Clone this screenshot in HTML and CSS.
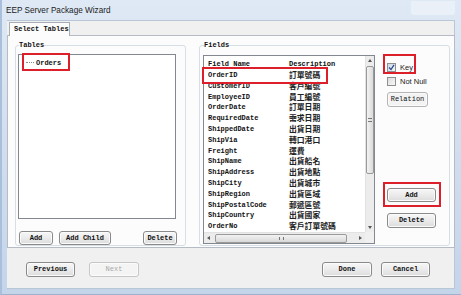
FILE: index.html
```html
<!DOCTYPE html>
<html lang="en">

<head>
  <meta charset="UTF-8">
  <meta name="viewport" content="width=device-width, initial-scale=1.0">
  <title>EEP Server Package Wizard</title>
  <link rel="stylesheet" href="styles.css">
</head>

<body>
  <div class="window">
    <div class="titlebar">
      <span class="caption">EEP Server Package Wizard</span>
      <span class="caps"></span>
    </div>
    <div class="client">
      <div class="tabs">
        <div class="tab">Select Tables</div>
      </div>
      <div class="page">
        <div class="group tables">
          <div class="legend">Tables</div>
          <div class="listbox">
            <div class="node"><span class="dots"></span>Orders</div>
          </div>
          <div class="btnrow">
            <div class="btn w34">Add</div>
            <div class="btn w52">Add Child</div>
            <div class="btn w34 right">Delete</div>
          </div>
        </div>
        <div class="group fields">
          <div class="legend">Fields</div>
          <div class="fieldbody">
            <div class="grid">
              <div class="rows">
                <div class="row head"><span class="name">Field Name</span><span>Description</span></div>
                <div class="row"><span class="name">OrderID</span><span class="cjk">訂單號碼</span></div>
                <div class="row"><span class="name">CustomerID</span><span class="cjk">客戶編號</span></div>
                <div class="row"><span class="name">EmployeeID</span><span class="cjk">員工編號</span></div>
                <div class="row"><span class="name">OrderDate</span><span class="cjk">訂單日期</span></div>
                <div class="row"><span class="name">RequiredDate</span><span class="cjk">需求日期</span></div>
                <div class="row"><span class="name">ShippedDate</span><span class="cjk">出貨日期</span></div>
                <div class="row"><span class="name">ShipVia</span><span class="cjk">轉口港口</span></div>
                <div class="row"><span class="name">Freight</span><span class="cjk">運費</span></div>
                <div class="row"><span class="name">ShipName</span><span class="cjk">出貨船名</span></div>
                <div class="row"><span class="name">ShipAddress</span><span class="cjk">出貨地點</span></div>
                <div class="row"><span class="name">ShipCity</span><span class="cjk">出貨城市</span></div>
                <div class="row"><span class="name">ShipRegion</span><span class="cjk">出貨區域</span></div>
                <div class="row"><span class="name">ShipPostalCode</span><span class="cjk">郵遞區號</span></div>
                <div class="row"><span class="name">ShipCountry</span><span class="cjk">出貨國家</span></div>
                <div class="row"><span class="name">OrderNo</span><span class="cjk">客戶訂單號碼</span></div>
              </div>
              <div class="vscroll">
                <div class="arrow up"></div>
                <div class="vthumb"><span class="grip"></span></div>
                <div class="arrow down"></div>
              </div>
              <div class="hscroll">
                <div class="arrow left"></div>
                <div class="hthumb"><span class="hgrip"></span></div>
                <div class="arrow rightarr"></div>
              </div>
              <div class="corner"></div>
            </div>
            <div class="side">
              <div class="check">
                <span class="box on">
                  <svg width="7" height="7" viewBox="0 0 7 7"><path d="M1 3.5 L3 5.5 L6 0.8" fill="none" stroke="#2c4a8a" stroke-width="1.3"/></svg>
                </span>Key
              </div>
              <div class="check"><span class="box"></span>Not Null</div>
              <div class="btn w41 rel">Relation</div>
              <div class="btn w49 add">Add</div>
              <div class="btn w49 del">Delete</div>
            </div>
          </div>
        </div>
      </div>
      <div class="footer">
        <div class="btn w49">Previous</div>
        <div class="btn w50 off next">Next</div>
        <div class="btn w50 done">Done</div>
        <div class="btn w49 cancel">Cancel</div>
      </div>
    </div>

    <div class="mark m1"></div>
    <div class="mark m2"></div>
    <div class="mark m3"></div>
    <div class="mark m4"></div>
  </div>
</body>

</html>
```

FILE: styles.css
```css
* {
  box-sizing: border-box;
}

body {
  margin: 0;
  background-color: #fff;
}

.window {
  position: relative;
  width: 461px;
  height: 295px;
  padding: 0 6px 5px 5px;
  display: flex;
  flex-direction: column;
  background: linear-gradient(#dfe9f5, #cfdced 60%, #c4d5ea);
  border-left: 2px solid #a9c0dc;
  border-bottom: 1px solid #9db2cc;
  font-family: "Liberation Mono", monospace;
  font-size: 7px;
  color: #111;
}

.titlebar {
  height: 20px;
  display: flex;
  align-items: center;
  justify-content: space-between;
  margin-left: -1px;
}

.caption {
  font-family: "Liberation Sans", Arial, sans-serif;
  font-size: 8.2px;
  color: #1c1c1c;
}

.caps {
  width: 44px;
  height: 14px;
  margin-top: -5px;
  border-radius: 0 0 3px 3px;
  background: rgba(255, 255, 255, 0.35);
}

.client {
  flex: 1;
  display: flex;
  flex-direction: column;
  background-color: #f0f0f0;
  border: 1px solid #b8c6d8;
  border-width: 1px 1px 1px 0;
}

.tabs {
  height: 14px;
  padding-left: 2px;
  display: flex;
  align-items: flex-end;
}

.tab {
  width: 61px;
  height: 14px;
  margin-bottom: -1px;
  padding-left: 4px;
  line-height: 12px;
  font-weight: bold;
  background-color: #fcfcfc;
  border: 1px solid #a7adb5;
  border-bottom: none;
  position: relative;
  z-index: 1;
}

.page {
  width: 448px;
  height: 213px;
  padding: 9px 0 0 7px;
  display: flex;
  align-items: flex-start;
  background-color: #fcfcfc;
  border: 1px solid #b5bcc5;
}

.group {
  height: 201px;
  border: 1px solid #d5dfe5;
  border-radius: 3px;
}

.group.tables {
  width: 171px;
}

.group.fields {
  width: 251px;
  margin-left: 13px;
}

.legend {
  width: fit-content;
  height: 11px;
  margin: -6px 0 0 3px;
  line-height: 11px;
  font-weight: bold;
  background-color: #fcfcfc;
}

.fields .legend {
  margin-left: 4px;
}

.listbox {
  width: 158px;
  height: 165px;
  margin: 3px 0 0 2px;
  padding: 2px 0 0 7px;
  background-color: #fff;
  border: 1px solid #828790;
}

.node {
  display: flex;
  align-items: center;
  height: 11px;
  font-weight: bold;
}

.dots {
  width: 8px;
  margin-right: 2px;
  border-top: 1px dotted #8a8a8a;
}

.btnrow {
  display: flex;
  margin: 12px 0 0 3px;
}

.btn {
  height: 14px;
  line-height: 12px;
  text-align: center;
  font-weight: bold;
  border: 1px solid #8a8a8a;
  border-radius: 3px;
  background: linear-gradient(#f7f7f7, #ebebeb 50%, #dcdcdc);
  box-shadow: inset 0 0 0 1px #fbfbfb;
}

.btnrow .btn + .btn {
  margin-left: 6px;
}

.btnrow .btn.right {
  margin-left: auto;
  margin-right: 8px;
}

.w34 { width: 34px; }
.w41 { width: 41px; }
.w49 { width: 49px; }
.w50 { width: 50px; }
.w52 { width: 52px; }

.fieldbody {
  display: flex;
  margin: 4px 0 0 3px;
}

.grid {
  width: 172px;
  height: 189px;
  display: grid;
  grid-template-columns: 1fr 9px;
  grid-template-rows: 1fr 11px;
  background-color: #fff;
  border: 1px solid #828790;
}

.rows {
  padding: 2px 0 0 4px;
  overflow: hidden;
}

.row {
  display: flex;
  height: 10.8px;
  line-height: 10.8px;
  white-space: nowrap;
  font-weight: bold;
}

.row.head {
  height: 12px;
  line-height: 12px;
}

.row .name {
  width: 81px;
}

.cjk {
  font-family: "Noto Sans CJK TC", sans-serif;
  font-size: 7.8px;
  font-weight: bold;
  color: #222;
}

.vscroll {
  display: flex;
  flex-direction: column;
  align-items: center;
  background-color: #ececec;
  border-left: 1px solid #e2e2e2;
}

.vthumb {
  width: 8px;
  height: 108px;
  margin-top: 1px;
  display: flex;
  align-items: center;
  justify-content: center;
  border: 1px solid #9a9a9a;
  border-radius: 2px;
  background: linear-gradient(90deg, #f3f3f3, #dadada);
}

.grip {
  width: 4px;
  height: 4px;
  border-top: 1px solid #777;
  border-bottom: 1px solid #777;
}

.hscroll {
  display: flex;
  align-items: center;
  background-color: #ececec;
  border-top: 1px solid #e2e2e2;
}

.hthumb {
  width: 132px;
  height: 9px;
  margin-left: 2px;
  display: flex;
  align-items: center;
  justify-content: center;
  border: 1px solid #9a9a9a;
  border-radius: 2px;
  background: linear-gradient(#f3f3f3, #d8d8d8);
}

.hgrip {
  width: 5px;
  height: 3px;
  border-left: 1px solid #777;
  border-right: 1px solid #777;
}

.corner {
  background-color: #f0f0f0;
}

.arrow {
  width: 9px;
  height: 9px;
  display: flex;
  align-items: center;
  justify-content: center;
}

.arrow::before {
  content: "";
  border: 2px solid transparent;
}

.arrow.up::before {
  border-bottom: 3px solid #555;
  border-top-width: 0;
}

.arrow.down {
  margin-top: auto;
}

.arrow.down::before {
  border-top: 3px solid #555;
  border-bottom-width: 0;
}

.arrow.left::before {
  border-right: 3px solid #555;
  border-left-width: 0;
}

.arrow.rightarr {
  margin-left: auto;
}

.arrow.rightarr::before {
  border-left: 3px solid #555;
  border-right-width: 0;
}

.side {
  display: flex;
  flex-direction: column;
  margin-left: 12px;
  padding-top: 8px;
  font-family: "Liberation Sans", Arial, sans-serif;
  font-size: 7.5px;
}

.check {
  display: flex;
  height: 14px;
  align-items: flex-start;
  color: #222;
  line-height: 9px;
}

.box {
  width: 9px;
  height: 9px;
  margin-right: 4px;
  display: flex;
  align-items: center;
  justify-content: center;
  border: 1px solid #8e8f8f;
  background: linear-gradient(135deg, #dcdcdc, #f8f8f8);
}

.box.on {
  background: linear-gradient(135deg, #cfd9e8, #f2f5fa);
}

.side .btn {
  font-family: "Liberation Mono", monospace;
  font-size: 7px;
}

.rel {
  height: 15px;
  margin-top: 1px;
  border-color: #b4b4b4;
  font-weight: normal;
  background: #f3f3f3;
}

.add {
  margin-top: 81px;
}

.del {
  height: 15px;
  margin-top: 11px;
}

.footer {
  flex: 1;
  display: flex;
  align-items: flex-start;
  padding: 14px 24px 0 19px;
}

.footer .btn {
  height: 15px;
}

.next {
  margin-left: 14px;
}

.off {
  color: #a8a8a8;
  font-weight: normal;
  border-color: #c6c6c6;
  background: #f4f4f4;
}

.done {
  margin-left: auto;
}

.cancel {
  margin-left: 9px;
}

.mark {
  position: absolute;
  border: 2px solid #dc1f2a;
}

.m1 {
  left: 20px;
  top: 53px;
  width: 48px;
  height: 18px;
}

.m2 {
  left: 200px;
  top: 67px;
  width: 126px;
  height: 17px;
}

.m3 {
  left: 381px;
  top: 54px;
  width: 33px;
  height: 20px;
}

.m4 {
  left: 381px;
  top: 182px;
  width: 58px;
  height: 25px;
}
```
